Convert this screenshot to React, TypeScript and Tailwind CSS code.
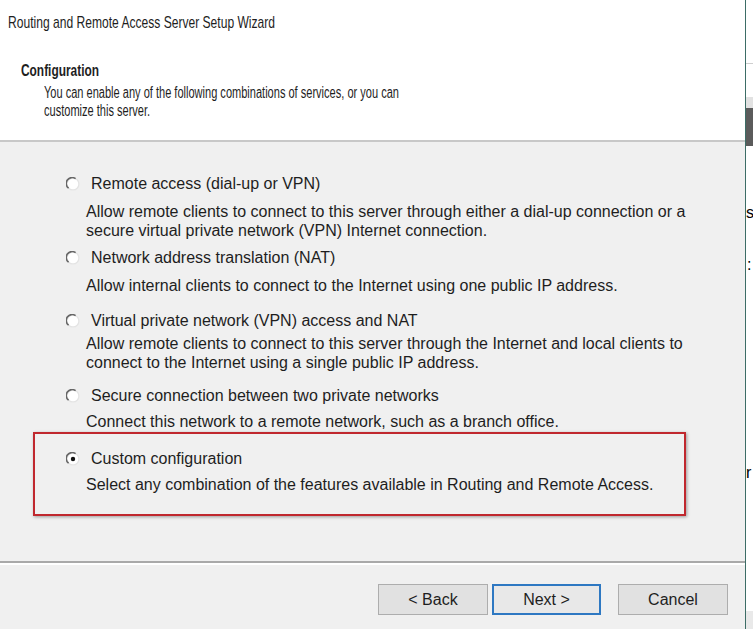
const sans = "font-['Liberation_Sans',Arial,sans-serif]";

function Radio({ checked }: { checked?: boolean }) {
  return (
    <svg width="14" height="14" viewBox="0 0 14 14" className="shrink-0">
      <circle cx="7" cy="7" r="5.9" fill="#ffffff" stroke="#e4e4e4" strokeWidth="1.3" />
      <path d="M2.6 11.2A5.9 5.9 0 0 1 9.6 1.7" fill="none" stroke="#666666" strokeWidth="1.6" />
      {checked && <circle cx="7" cy="7" r="2.2" fill="#111" />}
    </svg>
  );
}

type Opt = {
  label: string;
  desc: string[];
  top: string;
  gap: string;
};

const options: Opt[] = [
  {
    label: "Remote access (dial-up or VPN)",
    desc: [
      "Allow remote clients to connect to this server through either a dial-up connection or a",
      "secure virtual private network (VPN) Internet connection.",
    ],
    top: "mt-[32px]",
    gap: "mt-[8px]",
  },
  {
    label: "Network address translation (NAT)",
    desc: ["Allow internal clients to connect to the Internet using one public IP address."],
    top: "mt-[8px]",
    gap: "mt-[8px]",
  },
  {
    label: "Virtual private network (VPN) access and NAT",
    desc: [
      "Allow remote clients to connect to this server through the Internet and local clients to",
      "connect to the Internet using a single public IP address.",
    ],
    top: "mt-[16px]",
    gap: "mt-[3px]",
  },
  {
    label: "Secure connection between two private networks",
    desc: ["Connect this network to a remote network, such as a branch office."],
    top: "mt-[14px]",
    gap: "mt-[6px]",
  },
];

function Option({ opt, checked }: { opt: Opt; checked?: boolean }) {
  return (
    <div>
      <div className="flex h-[20px] items-center gap-[11px] text-[16px] leading-[20px]">
        <Radio checked={checked} />
        <span>{opt.label}</span>
      </div>
      <div className={`${opt.gap} ml-[20px] text-[16px] leading-[19px] whitespace-nowrap`}>
        {opt.desc.map((d) => (
          <div key={d}>{d}</div>
        ))}
      </div>
    </div>
  );
}

export default function App() {
  const custom: Opt = {
    label: "Custom configuration",
    desc: ["Select any combination of the features available in Routing and Remote Access."],
    top: "",
    gap: "mt-[6px]",
  };

  return (
    <div className={`flex h-[629px] w-[753px] overflow-hidden bg-white text-[#1e1e1e] ${sans}`}>
      {/* Wizard window */}
      <div className="flex w-[746px] flex-col border-r border-[#3d6d66]">
        {/* Header */}
        <div className="h-[140px] bg-white">
          <div className="pl-[8px] pt-[13px] text-[17px] leading-[20px]">
            <div className="origin-left scale-x-[0.71] whitespace-nowrap">
              Routing and Remote Access Server Setup Wizard
            </div>
          </div>
          <div className="mt-[28px] pl-[21px] text-[17px] font-bold leading-[20px]">
            <div className="origin-left scale-x-[0.7] whitespace-nowrap">Configuration</div>
          </div>
          <div className="mt-[3px] pl-[44px] text-[16px] leading-[18px]">
            <div className="origin-left scale-x-[0.69] whitespace-nowrap">
              You can enable any of the following combinations of services, or you can
            </div>
            <div className="origin-left scale-x-[0.69] whitespace-nowrap">customize this server.</div>
          </div>
        </div>
        <div className="h-[2px] bg-[#c8c8c8]" />

        {/* Body */}
        <div className="h-[419px] bg-[#f0f0f0] pl-[33px]">
          {options.map((o) => (
            <div key={o.label} className={`${o.top} pl-[33px]`}>
              <Option opt={o} />
            </div>
          ))}
          <div className="mt-[1px] w-[653px] border-2 border-[#c0282e] pb-[20px] pl-[31px] pt-[15px] shadow-[1px_1px_3px_rgba(0,0,0,0.35)]">
            <Option opt={custom} checked />
          </div>
        </div>

        <div className="h-[2px] bg-[#a9a9a9]" />
        <div className="h-[2px] bg-white" />

        {/* Footer */}
        <div className="flex flex-1 justify-end bg-[#f0f0f0] pr-[17px] pt-[19px]">
          <div className="flex h-[31px] items-start text-[16px]">
            <button className="flex h-[31px] w-[110px] items-center justify-center border border-[#adadad] bg-[#e1e1e1]">
              &lt; Back
            </button>
            <button className="ml-[4px] flex h-[31px] w-[109px] items-center justify-center border-2 border-[#2e78c2] bg-[#e8e8e8]">
              Next &gt;
            </button>
            <button className="ml-[17px] flex h-[31px] w-[110px] items-center justify-center border border-[#adadad] bg-[#e1e1e1]">
              Cancel
            </button>
          </div>
        </div>
      </div>

      {/* Background strip at right edge */}
      <div className="relative flex-1 bg-white text-[16px] leading-[18px] text-black">
        <div className="absolute left-0 right-0 top-[63px] h-[1px] bg-[#cfcfcf]" />
        <div className="absolute left-0 right-0 top-[97px] h-[11px] bg-[#e2e2e2]" />
        <div className="absolute left-0 right-0 top-[108px] h-[38px] bg-[#5b5b5b]" />
        <div className="absolute left-0 top-[204px]">s</div>
        <div className="absolute left-[1px] top-[256px]">:</div>
        <div className="absolute left-0 top-[464px]">r</div>
        <div className="absolute bottom-0 left-0 right-0 h-[18px] bg-[#e9e9e9]" />
      </div>
    </div>
  );
}
